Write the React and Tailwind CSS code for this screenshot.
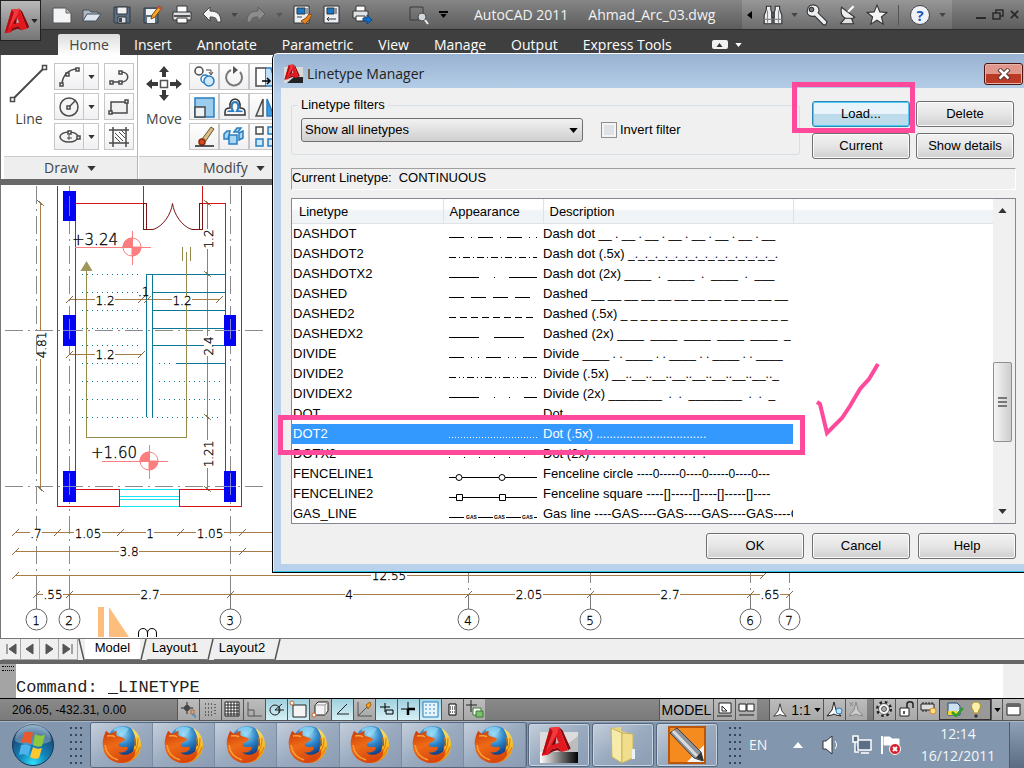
import clsx from "clsx";

const tabs = ["Insert", "Annotate", "Parametric", "View", "Manage", "Output", "Express Tools"];

const linetypes = [
  { name: "DASHDOT", dash: "15 7 1 6", desc: "Dash dot", pattern: "__ . __ . __ . __ . __ . __ . __ . __" },
  { name: "DASHDOT2", dash: "7 3 1 3", desc: "Dash dot (.5x)", pattern: "_._._._._._._._._._._._._._._." },
  { name: "DASHDOTX2", dash: "30 15 1 14", desc: "Dash dot (2x)", pattern: "____  .  ____  .  ____  .  ___" },
  { name: "DASHED", dash: "15 7", desc: "Dashed", pattern: "__ __ __ __ __ __ __ __ __ __ __ __" },
  { name: "DASHED2", dash: "7 4", desc: "Dashed (.5x)", pattern: "_ _ _ _ _ _ _ _ _ _ _ _ _ _ _ _ _" },
  { name: "DASHEDX2", dash: "30 15", desc: "Dashed (2x)", pattern: "____  ____  ____  ____  ____  _" },
  { name: "DIVIDE", dash: "15 7 1 6 1 7", desc: "Divide", pattern: "____ . . ____ . . ____ . . ____ . . ____" },
  { name: "DIVIDE2", dash: "7 3 1 3 1 3", desc: "Divide (.5x)", pattern: "__..__..__..__..__..__..__..__.._" },
  { name: "DIVIDEX2", dash: "30 15 1 14 1 14", desc: "Divide (2x)", pattern: "________  .  .  ________  .  .  _" },
  { name: "DOT", dash: "1 7", desc: "Dot", pattern: "" },
  { name: "DOT2", dash: "1 2", desc: "Dot (.5x)", pattern: ".................................", selected: true },
  { name: "DOTX2", dash: "1 14", desc: "Dot (2x)", pattern: ".  .  .  .  .  .  .  .  .  .  .  ." },
  { name: "FENCELINE1", mark: "circle", desc: "Fenceline circle", pattern: "----0-----0----0-----0----0---" },
  { name: "FENCELINE2", mark: "square", desc: "Fenceline square ----[]-----[]----[]-----[]----" },
  { name: "GAS_LINE", mark: "gas", desc: "Gas line ----GAS----GAS----GAS----GAS----G" },
];

function Caret({ className = "text-[#333]" }) {
  return (
    <svg viewBox="0 0 8 5" className={clsx("h-[4px] w-[7px] shrink-0", className)}>
      <path d="M0 0h8L4 5z" fill="currentColor" />
    </svg>
  );
}

function Icon({ size = 20, children }) {
  return (
    <svg width={size} height={size} viewBox="0 0 20 20" fill="none" stroke="#333" strokeWidth="1">
      {children}
    </svg>
  );
}

/* ---------- logos ---------- */

function AcadMark() {
  return (
    <>
      <path d="m20 1 4 4 9 20-3 2z" fill="#8c070c" />
      <path d="M10 2 20 1l10 26-7 2-4-5-8 2-3 6-7 1z" fill="#e3171d" />
      <path d="M10 2 20 1l-2 7-9 15L1 33z" fill="#f2383d" />
      <path d="m10 2 3 4L5 29l-4 4z" fill="#b50c12" />
      <path d="m12 21 5-9 3 7z" fill="#5f0407" />
      <path d="m17 12 3 7-4 1z" fill="#d9a3a4" />
      <path d="m8 32 3-6 8-2 4 5-5-2-6 2z" fill="#8c070c" />
    </>
  );
}

function Firefox() {
  return (
    <svg viewBox="0 0 40 40" className="h-[40px] w-[40px]">
      <defs>
        <radialGradient id="globe" cx="0.45" cy="0.25" r="0.75">
          <stop offset="0" stopColor="#a5e4fb" />
          <stop offset="0.45" stopColor="#2f86c9" />
          <stop offset="1" stopColor="#0a2a6b" />
        </radialGradient>
        <linearGradient id="fox" x1="0" y1="0" x2="0.4" y2="1">
          <stop offset="0" stopColor="#c8380b" />
          <stop offset="0.5" stopColor="#ee6a16" />
          <stop offset="1" stopColor="#d8480c" />
        </linearGradient>
        <linearGradient id="tail" x1="0" y1="0" x2="0" y2="1">
          <stop offset="0" stopColor="#fbe26a" />
          <stop offset="0.6" stopColor="#f6b21c" />
          <stop offset="1" stopColor="#ee8113" />
        </linearGradient>
      </defs>
      <circle cx="21" cy="17" r="16" fill="url(#globe)" />
      <path d="M12 4c5-3 11-3 15 0-3 2-1 4-5 5-4 0-6-2-10 0z" fill="#8fd6f5" opacity=".7" />
      <path d="M29 3c7 4 10 10 10 17 0 11-9 18-18 18l-2-4c8 0 13-6 13-12l2-2c0-6-1-11-5-17z" fill="url(#tail)" />
      <path d="M32 12c1 4 2 6 0 10m4-9c0 6-1 11-5 15m7-6c-2 6-5 9-9 11" fill="none" stroke="#d8760e" strokeWidth="1" />
      <path
        d="M4 6c1 0 2 2 4 3 3-1 4-3 7-3-1 2-1 3 0 5 3 1 6 1 8 3-1 3-5 3-6 5s1 3 4 3c2 0 4-1 5 1-2 5-8 5-10 4 5 5 13 3 17-3 2 8-5 14-14 14C9 38 1 30 1 21 0 15 2 11 4 6z"
        fill="url(#fox)"
      />
      <path d="M5 11c3 0 6-1 8 1M3 20c1 8 6 13 13 15" fill="none" stroke="#f9a13c" strokeWidth="1.500" />
    </svg>
  );
}

function StartOrb() {
  return (
    <svg viewBox="0 0 44 44" className="h-[44px] w-[44px]">
      <defs>
        <radialGradient id="orb" cx="0.5" cy="0.95" r="0.95">
          <stop offset="0" stopColor="#2fe0fa" />
          <stop offset="0.35" stopColor="#1287bb" />
          <stop offset="0.75" stopColor="#1b4f7e" />
          <stop offset="1" stopColor="#6f9cbb" />
        </radialGradient>
      </defs>
      <circle cx="22" cy="22" r="20.500" fill="url(#orb)" stroke="#16395a" />
      <path d="M4 18A18 18 0 0 1 40 18c-8 5-27 5-36 0z" fill="#fff" opacity=".28" />
      <path d="M13 10c3-2 6-1 9 0l-2 11c-4-2-6-2-10-1z" fill="#e8592b" />
      <path d="M24 11c3 2 6 2 10 1l-3 11c-3 1-6 1-9-1z" fill="#8dc63f" />
      <path d="M10 22c4-1 6-1 10 1l-3 10c-3-2-6-2-9-1z" fill="#4db3ea" />
      <path d="M22 24c3 2 6 2 9 1l-3 10c-3 1-6 1-9-1z" fill="#fdc82f" />
    </svg>
  );
}

/* ---------- quick access icons ---------- */

const quickIcons = {
  new: (
    <Icon>
      <path d="M1 3h13l5 5v10H1z" fill="#f2f4f6" stroke="#555" />
      <path d="M14 3v5h5z" fill="#b8bec4" stroke="#666" />
    </Icon>
  ),
  open: (
    <Icon>
      <path d="M1 16V5h6l2 2h7v3" fill="#aeb9c4" stroke="#44515d" />
      <path d="M1 16 5 9h14l-5 7z" fill="#dde6ee" stroke="#44515d" />
    </Icon>
  ),
  save: (
    <Icon>
      <path d="M2 2h16v16H3l-1-1z" fill="#5b6f83" stroke="#2f3b47" />
      <path d="M5 2h10v7H5z" fill="#eef2f5" />
      <path d="M6 12h8v6H6z" fill="#dbe1e6" />
      <path d="M7 13h3v4H7z" fill="#39475a" stroke="none" />
    </Icon>
  ),
  saveAs: (
    <Icon>
      <path d="M2 3h14v15H2z" fill="#5b6f83" stroke="#2f3b47" />
      <path d="M4 4h10v6H4zM5 12h8v6H5z" fill="#eef2f5" stroke="none" />
      <path d="m9 14 1-4 7-9 3 2-7 9z" fill="#f5a623" stroke="#7a4b05" />
      <path d="m16 2 3 2" stroke="#d4504b" strokeWidth="2" />
    </Icon>
  ),
  print: (
    <Icon>
      <path d="M5 1h10v7H5z" fill="#fff" />
      <path d="M1 7h18v8H1z" fill="#dfe3e6" />
      <path d="M2 11h16" stroke="#555" strokeWidth="2" />
      <path d="M5 13h10v5H5z" fill="#fff" />
    </Icon>
  ),
  undo: (
    <Icon>
      <path d="m1 9 7-7v4c7 0 11 3 11 11h-4c0-4-2-5-7-5v4z" fill="#f3f5f7" stroke="#444" />
    </Icon>
  ),
  redo: (
    <Icon>
      <path d="m19 9-7-7v4C5 6 1 9 1 17h4c0-4 2-5 7-5v4z" fill="#8c8c8c" stroke="#606060" />
    </Icon>
  ),
  match: (
    <Icon>
      <path d="M2 1h15v17H2z" fill="#e9eef3" />
      <path d="M5 3h8v6H5z" fill="#1b78c8" />
      <path d="M15 3v6M5 12h5" stroke="#444" />
      <path d="m9 16 5-3 3-4 3 1-3 5-4 4z" fill="#e58422" stroke="#8c4a0c" />
    </Icon>
  ),
  sheet: (
    <Icon>
      <path d="M2 1h15v17H2z" fill="#e9eef3" />
      <path d="M5 3h7v6H5z" fill="#1b78c8" />
      <path d="M14 3v6M5 14h9m-7-2-2 2 2 2" />
    </Icon>
  ),
  plot: (
    <Icon>
      <path d="M4 1h9v6H4z" fill="#fff" />
      <path d="M1 6h15v7H1z" fill="#dfe3e6" />
      <path d="M4 11h9v5H4z" fill="#fff" />
      <path d="M11 13h4v-3l5 5-5 4v-3h-4z" fill="#1270c9" stroke="#0b4687" />
    </Icon>
  ),
  preview: (
    <Icon>
      <path d="M1 2h13v13H1z" stroke="#3c3c3c" />
      <circle cx="13" cy="12" r="4" fill="#cfd6dc" stroke="#4a4a4a" />
      <path d="m16 15 3 4" stroke="#eee" strokeWidth="2" />
    </Icon>
  ),
};

function QuickButton({ name, label }) {
  return (
    <button aria-label={label} className="flex h-full w-[30px] items-center justify-center">
      {quickIcons[name]}
    </button>
  );
}

function TitleBar() {
  return (
    <header className="flex h-[30px] items-center border-b border-[#2c2c2c] bg-linear-to-b from-[#868686] to-[#5c5c5c] pl-[47px]">
      <QuickButton name="new" label="New" />
      <QuickButton name="open" label="Open" />
      <QuickButton name="save" label="Save" />
      <QuickButton name="saveAs" label="Save As" />
      <QuickButton name="print" label="Print" />
      <QuickButton name="undo" label="Undo" />
      <span className="flex w-[14px] justify-center"><Caret className="text-[#444]" /></span>
      <QuickButton name="redo" label="Redo" />
      <span className="flex w-[16px] justify-center"><Caret className="text-[#555]" /></span>
      <QuickButton name="match" label="Match Properties" />
      <QuickButton name="sheet" label="Sheet Set Manager" />
      <QuickButton name="plot" label="Plot" />
      <span className="w-[27px]" />
      <QuickButton name="preview" label="Plot Preview" />
      <span className="flex w-[18px] flex-col items-center gap-px">
        <span className="h-[2px] w-[9px] bg-black" />
        <Caret className="text-black" />
      </span>
      <h1 className="flex flex-1 gap-5 pl-[22px] text-[14px] whitespace-nowrap text-[#f2f2f2]">
        <span>AutoCAD 2011</span>
        <span>Ahmad_Arc_03.dwg</span>
      </h1>
      <div className="flex h-full w-[210px] items-center bg-linear-to-b from-[#979797] to-[#6c6c6c] pl-[5px]">
        <svg viewBox="0 0 5 8" className="h-[8px] w-[5px]"><path d="M5 0v8L0 4z" fill="#000" /></svg>
        <button aria-label="Search" className="ml-[10px]">
          <Icon size={22}>
            <path d="M4 2h4v3l1 3v10H2v-8l2-5zM12 2h4v3l2 5v8h-7V8l1-3z" fill="#eceff1" />
            <path d="M9 8h2v4H9z" fill="#777" />
            <path d="M2 14h7m2 0h7M5 6v11M15 6v11" stroke="#888" />
          </Icon>
        </button>
        <span className="ml-[7px]"><Caret className="text-[#444]" /></span>
        <button aria-label="Subscription Center" className="ml-[8px]">
          <Icon size={22}>
            <path d="M2 3c2-3 7-3 9 0 1 2 1 4 0 5l8 8-1 3h-2l-8-8C4 12 1 10 1 7z" fill="#eceff1" />
            <circle cx="5" cy="5" r="2" fill="#777" />
          </Icon>
        </button>
        <button aria-label="Communication Center" className="ml-[8px]">
          <Icon size={22}>
            <path d="m5 3 12 9c-4 3-8 2-10 0S4 7 5 3z" fill="#eceff1" />
            <path d="m11 7 5-5" stroke="#fff" strokeWidth="2" />
            <path d="m8 13-4 5h12l-2-5z" fill="#dfe3e6" />
          </Icon>
        </button>
        <button aria-label="Favorites" className="ml-[8px]">
          <Icon size={22}>
            <path d="m10 1 2.600 6.200 6.400.4-5 4.200 1.700 6.500-5.700-3.600-5.700 3.600L6 11.800 1 7.600l6.400-.4z" fill="#f2f4f6" />
          </Icon>
        </button>
        <span className="ml-[10px] h-[20px] w-px bg-[#555]" />
        <button aria-label="Help" className="ml-[11px] flex h-[20px] w-[20px] items-center justify-center rounded-full border border-[#444] bg-[#eef3fa] text-[15px] font-bold text-[#1f57b5]">
          ?
        </button>
        <span className="ml-[9px]"><Caret className="text-[#444]" /></span>
      </div>
      <div className="flex w-[72px] items-center justify-end gap-[6px] pr-[5px]">
        <button aria-label="Minimize" className="mt-[7px] h-[2px] w-[10px] bg-[#2a2a2a]" />
        <button aria-label="Restore">
          <svg viewBox="0 0 12 11" className="h-[11px] w-[12px]" fill="none" stroke="#2a2a2a" strokeWidth="1.500">
            <path d="M4 4V1h7v6H8M1 4h7v6H1z" />
          </svg>
        </button>
        <button aria-label="Close">
          <svg viewBox="0 0 10 10" className="h-[9px] w-[9px]" stroke="#2a2a2a" strokeWidth="2"><path d="m1 1 8 8m0-8L1 9" /></svg>
        </button>
      </div>
    </header>
  );
}

function TabBar() {
  return (
    <nav className="flex h-[25px] items-end bg-[#3f3f3f] pl-[58px] text-[14px] text-white">
      <a href="#home" className="flex h-[21px] w-[62px] items-center justify-center rounded-t-[2px] bg-linear-to-b from-[#dcdcdc] to-white text-[#444]">
        Home
      </a>
      <div className="flex h-[21px] items-center gap-[25px] pl-[14px] whitespace-nowrap">
        {tabs.map((tab) => (
          <a key={tab} href={`#${tab}`}>{tab}</a>
        ))}
      </div>
      <div className="flex h-[21px] items-center gap-[7px] pl-10">
        <button aria-label="Minimize ribbon" className="flex h-[9px] w-[16px] items-center justify-center rounded-[2px] bg-[#f0f0f0]">
          <svg viewBox="0 0 6 4" className="h-[4px] w-[7px]"><path d="M0 4h6L3 0z" fill="#333" /></svg>
        </button>
        <Caret className="text-white" />
      </div>
    </nav>
  );
}

/* ---------- ribbon ---------- */

function Tool({ children, caret, label }) {
  return (
    <button aria-label={label} className="flex h-[27px] items-center border border-[#c6c6c6] bg-linear-to-b from-white to-[#f0f0f2]">
      <svg viewBox="0 0 28 24" className="h-[24px] w-[28px]" fill="none" stroke="#4a4a4a" strokeWidth="1.500">
        {children}
      </svg>
      {caret && (
        <span className="flex h-full w-[15px] items-center justify-center border-l border-[#c6c6c6]">
          <Caret className="text-[#333]" />
        </span>
      )}
    </button>
  );
}

function PanelLabel({ children }) {
  return (
    <div className="flex h-[23px] items-center gap-2 border-t border-[#ccc] bg-[#eee] text-[14px] text-[#444]">
      {children}
      <svg viewBox="0 0 10 6" className="h-[5px] w-[9px]"><path d="M0 0h10L5 6z" fill="#333" /></svg>
    </div>
  );
}

function Ribbon() {
  return (
    <section className="flex h-[130px] overflow-hidden border-b-[6px] border-l border-[#696969] bg-white pl-[3px] text-[#444]">
      <div className="flex w-[134px] shrink-0 flex-col border-r border-[#b5b5b5]">
        <div className="flex flex-1 items-start pt-[8px]">
          <button className="flex w-[50px] flex-col items-center gap-[6px] text-[14px]">
            <svg viewBox="0 0 40 40" className="h-[40px] w-[40px]" fill="#fff" stroke="#4a4a4a">
              <path d="M3 37 36 4" strokeWidth="2" />
              <path d="M1.500 34.500h4v4h-4zM33.500 2.500h4v4h-4z" strokeWidth="1.500" />
            </svg>
            Line
          </button>
          <div className="flex flex-col gap-[3px]">
            <Tool caret label="Arc">
              <path d="M7 20c0-9 6-16 16-16" />
              <path d="M5 18h3v3H5zM11 8h3v3h-3zM21 3h3v3h-3z" fill="#fff" />
            </Tool>
            <Tool caret label="Circle">
              <circle cx="14" cy="12" r="9" fill="#f4f4f4" />
              <path d="m14 12 6-6" />
              <path d="M12 11h3v3h-3z" fill="#fff" />
            </Tool>
            <Tool caret label="Ellipse">
              <ellipse cx="14" cy="12" rx="9" ry="5" fill="#f4f4f4" />
              <path d="M14 10v5m-2-2h5" strokeWidth="1" />
              <path d="M13 6h3v3h-3zM22 11h3v3h-3z" fill="#fff" />
            </Tool>
          </div>
          <div className="ml-[5px] flex flex-col gap-[3px]">
            <Tool label="Polyline">
              <path d="M6 17h10c9 0 9-10 0-10" />
              <path d="M5 16h3v3H5zM14 16h3v3h-3zM14 6h3v3h-3z" fill="#fff" />
            </Tool>
            <Tool label="Rectangle">
              <path d="M6 7h16v11H6z" fill="#f0f0f0" />
              <path d="M4 16h3v3H4zM20 5h3v3h-3z" fill="#fff" />
            </Tool>
            <Tool label="Hatch">
              <path d="M8 2v20M21 2v20M4 5h20M4 18h20" />
              <path d="m10 8 8 8m-8-4 5 5m-1-10 6 6m-10-8m6 0 4 4" strokeWidth="1" />
            </Tool>
          </div>
        </div>
        <PanelLabel><span className="pl-[40px]">Draw</span></PanelLabel>
      </div>
      <div className="ml-px flex w-[200px] shrink-0 flex-col">
        <div className="flex flex-1 items-start pt-[8px]">
          <button className="flex w-[50px] flex-col items-center gap-[6px] text-[14px]">
            <svg viewBox="0 0 40 40" className="h-[40px] w-[40px]" fill="#3a3a3a">
              <path d="m20 3 5 6h-3v5h-4V9h-3zM20 38l5-6h-3v-5h-4v5h-3zM2 21l6-5v3h6v4H8v3zM38 21l-6-5v3h-6v4h6v3z" />
              <path d="M16.500 17.500h7v7h-7z" fill="#fff" stroke="#555" strokeWidth="1.500" />
            </svg>
            Move
          </button>
          <div className="flex flex-col gap-[3px]">
            <div className="flex">
              <Tool label="Copy">
                <circle cx="9" cy="6" r="4" />
                <circle cx="15" cy="14" r="4" fill="#fff" stroke="#2a7dc0" />
                <circle cx="19" cy="16" r="5" fill="#cfe8f8" stroke="#2a7dc0" />
                <path d="M16 5h5v4m-2-2 2 3 2-3" strokeWidth="1" />
              </Tool>
              <Tool label="Rotate">
                <path d="M11 5a8 8 0 1 0 9 2" strokeWidth="2" stroke="#777" />
                <path d="m13 1 5 4-5 4z" fill="#555" stroke="none" />
              </Tool>
              <Tool label="Stretch">
                <path d="M6 3h10v18H6z" fill="#fff" />
                <path d="M16 3h5l5 18H16" fill="#bfe0f6" stroke="#2a7dc0" />
                <path d="M12 16h8m-3-3 3 3-3 3" stroke="#000" />
              </Tool>
            </div>
            <div className="flex">
              <Tool label="Scale">
                <path d="M5 3h19v19H5z" fill="#9ccdef" stroke="#2a7dc0" />
                <path d="M5 12h10v10H5z" fill="#eef1f4" />
              </Tool>
              <Tool label="Offset">
                <path d="M5 20v-3c0-3 2-4 5-4-2-12 12-12 10 0 3 0 5 1 5 4v3z" stroke="#333" />
                <path d="M8 17c0-1 2-1 5-1-2-3-2-9 2-9s4 6 2 9c3 0 5 0 5 1" stroke="#2a7dc0" strokeWidth="2" />
              </Tool>
              <Tool label="Mirror">
                <path d="M13 4v17H6z" fill="#eee" />
                <path d="M17 4v17h7z" fill="#3f9ae0" stroke="#2a7dc0" />
              </Tool>
            </div>
            <div className="flex">
              <Tool label="Erase">
                <path d="m12 14 9-12 3 2-9 13z" fill="#d9bd86" stroke="#6b5430" strokeWidth="1" />
                <circle cx="12" cy="17" r="3" fill="#d9481c" stroke="#8c2a0c" />
                <path d="M5 21h19" stroke="#222" />
              </Tool>
              <Tool label="Explode">
                <path d="M9 10h8v9H9zM4 9l3-3h3l-2 8H4zM14 7l3-4h4l-3 4zM19 8l4-2v7l-4 2z" fill="#a8d6f3" stroke="#2a7dc0" />
              </Tool>
              <Tool label="Array">
                <path d="M6 2h7v7H6z" />
                <path d="M18 2h7v7h-7zM6 14h7v7H6zM18 14h7v7h-7z" fill="#cfe8f8" stroke="#2a7dc0" />
              </Tool>
            </div>
          </div>
        </div>
        <PanelLabel><span className="pl-[64px]">Modify</span></PanelLabel>
      </div>
    </section>
  );
}

/* ---------- model space ---------- */

const axes = [
  { x: 36, n: 1 },
  { x: 69, n: 2 },
  { x: 230, n: 3 },
  { x: 468, n: 4 },
  { x: 590, n: 5 },
  { x: 750, n: 6 },
  { x: 789, n: 7 },
];

const dims = [
  { x: 105, y: 115, t: "1.2" },
  { x: 182, y: 115, t: "1.2" },
  { x: 105, y: 169, t: "1.2" },
  { x: 36, y: 348, t: ".7" },
  { x: 88, y: 348, t: "1.05" },
  { x: 150, y: 348, t: "1" },
  { x: 210, y: 348, t: "1.05" },
  { x: 129, y: 366, t: "3.8" },
  { x: 389, y: 390, t: "12.55" },
  { x: 53, y: 409, t: ".55" },
  { x: 150, y: 409, t: "2.7" },
  { x: 349, y: 409, t: "4" },
  { x: 529, y: 409, t: "2.05" },
  { x: 670, y: 409, t: "2.7" },
  { x: 770, y: 409, t: ".65" },
  { x: 41, y: 160, t: "4.81", vertical: true },
  { x: 208, y: 54, t: "1.2", vertical: true },
  { x: 208, y: 161, t: "2.4", vertical: true },
  { x: 208, y: 269, t: "1.21", vertical: true },
];

const ticks = [
  [15, 347], [57, 347], [120, 347], [180, 347], [242, 347],
  [15, 366], [242, 366], [15, 390], [763, 390],
  [69, 114], [141, 114], [147, 114], [219, 114], [69, 169], [141, 169],
  ...axes.map((a) => [a.x, 409]),
];

function Dim({ x, y, t, vertical }) {
  // blank out the dimension line behind the value
  const w = t.length * 8 - (t.includes(".") ? 4 : 0);
  return (
    <g transform={`translate(${x} ${y})${vertical ? " rotate(-90)" : ""}`}>
      <rect x={-w / 2} y="-4" width={w} height="8" fill="#fff" stroke="none" />
      <text y="5" textAnchor="middle">{t}</text>
    </g>
  );
}

function LevelMark({ x, y, from, to }) {
  return (
    <g stroke="#fb7f7f" fill="none">
      <path d={`M${from} ${y + 0.5}H${to}M${x + 0.5} ${y - 16}V${y + 18}`} />
      <circle cx={x} cy={y} r="9" />
      <path d={`M${x} ${y}h-9a9 9 0 0 1 9-9zM${x} ${y}h9a9 9 0 0 1-9 9z`} fill="#fb7f7f" />
    </g>
  );
}

function Drawing() {
  return (
    <main className="flex-1 overflow-hidden border-l border-[#777] bg-white">
      <svg viewBox="1 0 1023 452" preserveAspectRatio="xMinYMin meet" className="block h-[452px] w-full">
        <g fill="none" shapeRendering="crispEdges">
          <g stroke="#8a8a8a" strokeDasharray="18 5 2 5">
            <path d="M36.500 1V424M69.500 1V424M230.500 1V424M468.500 380V424M590.500 380V424M750.500 380V424M789.500 380V424" />
            <path d="M5 145.500H268M5 301.500H268" />
          </g>
          <g stroke="#a87c48">
            <path d="M40.500 18V304M207.500 18V304" />
            <path d="M69 114.500H219M69 169.500H142M15 347.500H272M15 366.500H272M15 390.500H763M36 409.500H789" />
            <path d="M37 15l7 6M37 301l7 6M204 15l7 6M204 86l7 6M204 229l7 6M204 301l7 6" stroke="#8a7a55" />
          </g>
          <g stroke="#d4151c">
            <path d="M57.500 1V321.500H241.500V1M75.500 18V304M75 18.500H147M143.500 1V18M202.500 1V18M199 18.500H225V304" />
            <path d="M75 304.500H119.500V321M225 304.500H179.500V321" />
          </g>
          <path d="M120 304.500h59M120 311.500h59M120 314.500h59M120 321.500h59" stroke="#14e8f2" />
          <g stroke="#0a7896">
            <path d="M146.500 89V232M152.500 89V232M146 89.500H225M152 107.500H225M152 125.500H225M152 143.500H225M152 160.500H225M176 178.500H225" />
            <path d="M82 89.500H142M82 107.500H142M82 125.500H142M82 143.500H142M82 160.500H142M82 178.500H142M82 196.500H142M82 214.500H142M82 232.500H220M159 178.500H172M159 196.500H220M159 214.500H220" strokeDasharray="1 4" />
          </g>
          <path d="M86.500 86V252.500H186.500V67M182.500 62V76M190.500 62V76" stroke="#948a4c" />
          <path d="M146.500 18v26h-3V18zM202.500 18v26h-3V18z" stroke="#7c1414" />
        </g>
        <path d="M146 44.500h7c10-3 18-15 19.500-26 1.500 11 9.500 23 19.500 26h8" fill="none" stroke="#7c1414" />
        <path d="m86.500 76 6 10h-12z" fill="#a0955a" />
        <path d="M63 6h13v30H63zM63 130h13v31H63zM224 130h12v31h-12zM63 286h13v31H63zM224 286h12v31h-12z" fill="#0404f4" />
        <path d="M69.500 11v20M69.500 134v20M230.500 134v20M69.500 288v22M230.500 288v22M63 145.500h13M224 145.500h12M63 301.500h13M224 301.500h12" stroke="#8080d0" />
        <LevelMark x={132} y={62} from={75} to={151} />
        <LevelMark x={149} y={276} from={102} to={168} />
        {ticks.map(([x, y]) => (
          <path key={`${x}-${y}`} d={`M${x - 3} ${y + 4}l7-7`} stroke="#8a6a45" />
        ))}
        {axes.map((axis) => (
          <g key={axis.n} fill="none">
            <path d={`M${axis.x + 0.5} 410v14`} stroke="#777" />
            <circle cx={axis.x + 0.5} cy="434.500" r="10.500" stroke="#666" />
          </g>
        ))}
        <g fill="#000" stroke="#000" strokeWidth=".3" className="font-['DejaVu_Sans'] text-[12px] font-extralight">
          {dims.map((d) => (
            <Dim key={`${d.x}-${d.y}`} {...d} />
          ))}
          {axes.map((axis) => (
            <text key={axis.n} x={axis.x} y="440" textAnchor="middle">{axis.n}</text>
          ))}
          <text x="138" y="111">.1</text>
          <text x="72" y="60" className="text-[15px]">+3.24</text>
          <text x="91" y="273" className="text-[15px]">+1.60</text>
        </g>
        <path d="M98 422h6v30h-6zM109 422v30h20z" fill="#fdbd7c" />
        <path d="M138.500 452v-4c0-6 9-6 9 0v4m0-4c0-6 9-6 9 0v4" fill="none" stroke="#000" />
      </svg>
    </main>
  );
}

function Slash({ back }) {
  return (
    <svg viewBox="0 0 7 21" className="h-[21px] w-[7px] shrink-0" stroke="#555" strokeWidth="1.500">
      <path d={back ? "M1 0l5 21" : "M6 0L1 21"} />
    </svg>
  );
}

function LayoutTabs() {
  return (
    <div className="flex h-[22px] border-t border-[#777] bg-[#efefef] pl-[2px] font-['Liberation_Sans'] text-[13px] text-black">
      {["M3 2v10M12 2v10L5 7z", "M10 2v10L3 7z", "M4 2v10l7-5z", "M2 2v10l7-5zM11 2v10"].map((d) => (
        <button key={d} aria-label="Scroll layouts" className="flex w-[19px] items-center justify-center border-r border-b border-[#aaa]">
          <svg viewBox="0 0 14 14" className="h-[14px] w-[14px]" fill="#555" stroke="#555"><path d={d} /></svg>
        </button>
      ))}
      <Slash back />
      <a href="#model" className="flex w-[55px] items-center justify-center border-b border-[#777] bg-white pb-[3px]">Model</a>
      <Slash />
      <a href="#layout1" className="flex w-[60px] items-center justify-center border-b border-[#777] pr-1 pb-[3px]">Layout1</a>
      <Slash />
      <a href="#layout2" className="flex w-[60px] items-center justify-center border-b border-[#777] pr-1 pb-[3px]">Layout2</a>
      <Slash />
    </div>
  );
}

function CommandLine() {
  return (
    <div className="flex h-[39px] border-t-4 border-b border-t-[#666] border-b-black bg-white">
      <div className="flex w-[16px] shrink-0 justify-center bg-[#a4a4a4] pt-[2px]">
        <span className="h-[5px] w-[12px] border-y border-dotted border-black" />
      </div>
      <label className="flex flex-1 items-end pb-px font-['Liberation_Mono'] text-[17px] leading-[18px] whitespace-pre text-[#222]">
        <span>Command: </span>
        <input type="text" defaultValue="_LINETYPE" className="min-w-0 flex-1 outline-none" />
      </label>
      <div className="w-[21px] bg-[#efefef]" />
    </div>
  );
}

/* ---------- status bar ---------- */

const toggles = [
  { label: "Infer Constraints", icon: <><path d="M8 2v12M2 8h12" /><path d="M6 6h4v4H6z" /><path d="M12 10h3v4h-3z" stroke="#d2601a" /><path d="M13 15h3v3" stroke="#2a7dc0" /></> },
  { label: "Snap Mode", icon: <path d="M4 4h9M4 8h9M4 12h9M4 15h9M14 4v12" strokeDasharray="1 2" stroke="#111" /> },
  { label: "Grid Display", icon: <><path d="M2 2h14v14H2z" fill="#fff" /><path d="M5 2v14M8 2v14M11 2v14M14 2v14M2 5h14M2 8h14M2 11h14M2 14h14" /></> },
  { label: "Ortho Mode", icon: <path d="M3 2v14h14M3 10h6v6" stroke="#555" /> },
  { label: "Polar Tracking", on: true, icon: <><circle cx="8" cy="10" r="5" /><path d="M8 10 15 4M8 10h9M12 6v7" /></> },
  { label: "Object Snap", on: true, icon: <><path d="M4 5h13v12H4z" fill="#f4f4f4" /><circle cx="3" cy="3" r="2" fill="#fff" stroke="#d2601a" /></> },
  { label: "3D Object Snap", icon: <><path d="M4 5l3-3h10v9l-3 4H4z" fill="#f4f4f4" /><path d="M4 5h10v10M14 5l3-3" stroke="#999" /><circle cx="3" cy="15" r="2" fill="#fff" stroke="#d2601a" /></> },
  { label: "Object Snap Tracking", on: true, icon: <path d="M14 4 4 14h12" /> },
  { label: "Dynamic UCS", icon: <><path d="M3 2v14h14M3 16l9-9" stroke="#555" /><path d="m11 5 4-3 1 3-3 4z" fill="#f5a623" stroke="#a35f05" /></> },
  { label: "Dynamic Input", on: true, icon: <path d="M8 3v9M3 7h10M9 10h7v4H9z" stroke="#000" /> },
  { label: "Lineweight", on: true, icon: <><path d="M9 2v8M2 9h7" stroke="#000" /><path d="M9 9h7M9 9v6" stroke="#000" strokeWidth="2.500" /></> },
  { label: "Transparency", on: true, icon: <><path d="M2 2h15v15H2z" fill="#e6f4fc" stroke="#2a7dc0" /><path d="M4 5h12M4 9h12M4 13h12" stroke="#8cbfe2" strokeWidth="2" strokeDasharray="2 2" /></> },
  { label: "Quick Properties", icon: <><path d="M6 4h7v11H6z" fill="#fff" stroke="#000" /><path d="M7 7h5M7 9h5M7 12h5" stroke="#000" strokeDasharray="1 1" /></> },
  { label: "Selection Cycling", icon: <><path d="M6 0v12M1 5h11" /><path d="M8 8h8v7H8z" fill="#fff" stroke="#3a7a32" /><path d="M11 11h7v6h-7z" fill="#7cbf6c" stroke="#3a7a32" /></> },
];

function StatusButton({ label, on, children, className = "w-[22px]" }) {
  return (
    <button
      aria-label={label}
      className={clsx(
        "flex h-full shrink-0 items-center justify-center gap-[3px] border-l border-[#555] text-black",
        on ? "bg-linear-to-b from-[#9fd0de] to-[#d6f0f6]" : "bg-linear-to-b from-[#bcbcbc] to-[#a8a8a8]",
        className
      )}>
      {children}
    </button>
  );
}

function StatusIcon({ children }) {
  return (
    <svg viewBox="0 0 19 19" className="h-[19px] w-[19px] shrink-0" fill="none" stroke="#222" strokeWidth="1">
      {children}
    </svg>
  );
}

const annoMark = "M9 2l2 8 5 6-5-1-2-1-2 1-5 1 5-6z";

function StatusBar() {
  return (
    <footer className="flex h-[22px] items-center border-b border-[#555] bg-linear-to-b from-[#8a8a8a] to-[#7a7a7a] font-['Liberation_Sans']">
      <div className="w-[177px] shrink-0 pl-3 text-[12px] text-black">206.05, -432.31, 0.00</div>
      {toggles.map((t) => (
        <StatusButton key={t.label} label={t.label} on={t.on}>
          <StatusIcon>{t.icon}</StatusIcon>
        </StatusButton>
      ))}
      <div className="flex-1" />
      <StatusButton className="w-[54px] text-[14px]">MODEL</StatusButton>
      <StatusButton label="Quick View Layouts">
        <StatusIcon><path d="M4 3h12v10H4zM2 16h15" fill="#fff" /><path d="M7 6v5h5z" /></StatusIcon>
      </StatusButton>
      <StatusButton label="Quick View Drawings">
        <StatusIcon><path d="M2 4h7v7H2zM10 4h7v7h-7zM2 15h15" fill="#fff" /></StatusIcon>
      </StatusButton>
      <span className="w-[12px]" />
      <StatusButton className="w-[54px] text-[14px]">
        <svg viewBox="0 0 18 18" className="h-[16px] w-[16px]"><path d={annoMark} fill="#fff" stroke="#333" /></svg>
        1:1
        <Caret className="text-black" />
      </StatusButton>
      <StatusButton label="Annotation Visibility">
        <StatusIcon><path d={annoMark} fill="#fff" /><circle cx="14" cy="11" r="3" fill="#bfe3f6" stroke="#2a7dc0" /></StatusIcon>
      </StatusButton>
      <StatusButton label="Add Scales">
        <StatusIcon><path d={annoMark} fill="#ccc" stroke="#888" /><path d="m2 2 4 4M6 2 3 6" stroke="#888" /></StatusIcon>
      </StatusButton>
      <span className="w-[6px]" />
      <StatusButton label="Workspace Switching">
        <StatusIcon>
          <circle cx="9" cy="9" r="6.500" fill="#fff" strokeWidth="3" strokeDasharray="2.500 2.600" />
          <circle cx="9" cy="9" r="5.500" fill="#f4f4f4" stroke="#555" />
          <circle cx="9" cy="9" r="2.500" fill="#aaa" stroke="#555" />
        </StatusIcon>
      </StatusButton>
      <StatusButton label="Lock UI">
        <StatusIcon><path d="M3 8h9v8H3z" fill="#fff" /><path d="M10 8V4c0-3 6-3 6 0v4M7 11v3" strokeWidth="1.500" /></StatusIcon>
      </StatusButton>
      <StatusButton label="Hardware Acceleration">
        <StatusIcon><path d="M2 4h13v6H2z" fill="#ddd" /><path d="M4 2v2m3-2v2m3-2v2m3-2v2M4 10v2m3-2v2" /><circle cx="14" cy="11" r="3" fill="#ffe08a" stroke="#e08a1a" /></StatusIcon>
      </StatusButton>
      <div className="flex h-full w-[52px] items-center justify-center gap-[3px] border border-[#333] bg-[#999]">
        <StatusIcon>
          <path d="M3 3h9l3 3v9H3z" fill="#cfe0f0" stroke="#234a77" />
          <path d="M3 11h9v4H3z" fill="#f7d92e" stroke="none" />
          <path d="m7 12 4 4 7-8" stroke="#2aa02a" strokeWidth="2.500" />
        </StatusIcon>
        <StatusIcon><path d="M9 2c4 0 6 4 3 8l-1 3H7l-1-3C3 6 5 2 9 2z" fill="#fdf0a8" stroke="#b09428" /><path d="M8 15h2v2H8z" fill="#888" /></StatusIcon>
      </div>
      <StatusButton label="Status bar menu" className="w-[11px]"><Caret className="text-black" /></StatusButton>
      <StatusButton label="Clean Screen">
        <StatusIcon><path d="M3 4h13v11H3z" fill="#fff" /><path d="M3 5.500h13" strokeWidth="3" stroke="#666" /></StatusIcon>
      </StatusButton>
    </footer>
  );
}

/* ---------- taskbar ---------- */

function Grip() {
  return (
    <div className="grid shrink-0 grid-cols-3 gap-x-[3px] gap-y-[5px]">
      {Array.from({ length: 18 }, (_, i) => (
        <span key={i} className="h-[2px] w-[2px] bg-[#39465a]" />
      ))}
    </div>
  );
}

function TaskButton({ label, children, grouped }) {
  return (
    <button
      aria-label={label}
      className={clsx(
        "flex h-[44px] items-center justify-center bg-linear-to-br from-[#c5cfdc] via-[#9aabc0] to-[#8b9cb3]",
        grouped ? "flex-1 border-r border-[#7b8ba1]" : "w-[62px] shrink-0 rounded-[3px] border border-[#56667c] ring-1 ring-[#c9d4e1] ring-inset"
      )}>
      {children}
    </button>
  );
}

function Taskbar() {
  return (
    <div className="flex h-[47px] items-center overflow-hidden border-t border-[#a8b5c6] bg-[#8296ad] text-[14px] text-[#f4f6f8]">
      <button aria-label="Start" className="ml-[11px] shrink-0"><StartOrb /></button>
      <div className="ml-[15px]"><Grip /></div>
      <div className="ml-[8px] flex w-[437px] shrink-0 overflow-hidden rounded-[3px] border border-[#56667c]">
        {Array.from({ length: 7 }, (_, i) => (
          <TaskButton key={i} label="Firefox" grouped><Firefox /></TaskButton>
        ))}
      </div>
      <div className="ml-px flex gap-[2px]">
        <TaskButton label="AutoCAD">
          <svg viewBox="0 0 40 40" className="h-[40px] w-[40px]">
            <defs>
              <linearGradient id="acadfade" x1="0" y1="0" x2="1" y2="0">
                <stop offset="0" stopColor="#fff" />
                <stop offset="1" stopColor="#000" />
              </linearGradient>
            </defs>
            <path d="M1 7h38v20H1z" fill="#dcdcdc" />
            <path d="m18 27 21-16v16z" fill="#bdbdbd" />
            <path d="M1 27h38v11H1z" fill="url(#acadfade)" />
            <g transform="translate(2 1) scale(.9)"><AcadMark /></g>
          </svg>
        </TaskButton>
        <TaskButton label="Explorer">
          <svg viewBox="0 0 30 40" className="h-[40px] w-[30px]">
            <path d="M3 3l10-1v4l11 3v25l-11 3z" fill="#e9d580" />
            <path d="M3 3l11 5v30L4 32z" fill="#f7eba9" stroke="#c9b35a" />
            <path d="M14 8l11 1v24l-11 5z" fill="#f0de8d" stroke="#c9b35a" />
            <path d="M24 24h3v10h-3z" fill="#e8f2f8" />
          </svg>
        </TaskButton>
        <TaskButton label="Paint tool">
          <svg viewBox="0 0 40 40" className="h-[40px] w-[40px]">
            <path d="M2 2h36v36H2z" fill="#f58a1f" stroke="#b9560c" strokeWidth="2" />
            <path d="m20 37 17-17v17z" fill="#f4f4f4" />
            <path d="m3 8 7-5 24 24 2 9-9-3z" fill="#8d9196" stroke="#3f4347" />
            <path d="m6 6 24 25" stroke="#d9dcdf" strokeWidth="3" />
            <path d="m29 33 5-6 3 9z" fill="#333" />
          </svg>
        </TaskButton>
      </div>
      <div className="ml-[11px]"><Grip /></div>
      <span className="ml-[8px] w-[20px]">EN</span>
      <div className="ml-auto flex items-center">
        <svg viewBox="0 0 10 6" className="h-[6px] w-[10px]"><path d="M0 6h10L5 0z" fill="#fff" /></svg>
        <svg viewBox="0 0 20 20" className="ml-[19px] h-[20px] w-[20px]" fill="#fff" stroke="#333">
          <path d="M1 6h3l6-5v18l-6-5H1z" />
          <path d="M13 6c2 3 2 5 0 8" fill="none" stroke="#fff" />
        </svg>
        <svg viewBox="0 0 20 20" className="ml-[10px] h-[20px] w-[20px]" fill="#5c6f86" stroke="#fff" strokeWidth="1.500">
          <path d="M6 5h13v10H6zM9 18h8M1 1h5v6H1zM3 7v10h4" />
        </svg>
        <svg viewBox="0 0 20 20" className="ml-[9px] h-[20px] w-[20px]" stroke="#fff">
          <path d="M1 1v18" strokeWidth="2" />
          <path d="M3 2h6l2 2h7v8h-7L9 10H3z" fill="#fff" />
          <circle cx="14" cy="14" r="5.500" fill="#d3202a" />
          <path d="m12 12 4 4m0-4-4 4" strokeWidth="2" />
        </svg>
        <div className="ml-[18px] w-[78px] text-center leading-[22px] whitespace-nowrap">
          <div>12:14</div>
          <div>16/12/2011</div>
        </div>
        <button aria-label="Show desktop" className="ml-[12px] h-[47px] w-[15px] border-l border-[#4c5b6f] bg-linear-to-b from-[#8ea0b6] to-[#5a6b82]" />
      </div>
    </div>
  );
}

/* ---------- linetype manager ---------- */

function DialogButton({ children, primary }) {
  return (
    <button
      className={clsx(
        "h-[26px] w-[98px] shrink-0 rounded-[3px] border text-[13px] ring-1 ring-inset",
        primary
          ? "border-[#2c86b4] bg-linear-to-b from-[#e8f4fa] from-50% to-[#bcdcec] to-50% ring-[#4fcdf5]"
          : "border-[#707070] bg-linear-to-b from-[#f2f2f2] via-[#e6e6e6] to-[#cfcfcf] ring-[#fafafa]"
      )}>
      {children}
    </button>
  );
}

function Sample({ type }) {
  return (
    <svg viewBox="0 0 88 20" className="block h-[20px] w-[88px]" fill="none" stroke="currentColor" shapeRendering={type.mark ? "auto" : "crispEdges"}>
      {type.dash && <path d="M0 13.500H88" strokeDasharray={type.dash} />}
      {type.mark === "circle" && <path d="M0 13.500h7m6 0h37m6 0h32M13 13.500a3 3 0 1 1-6 0 3 3 0 0 1 6 0zM56 13.500a3 3 0 1 1-6 0 3 3 0 0 1 6 0z" />}
      {type.mark === "square" && <path d="M0 13.500h7m7 0h36m7 0h31M7.500 10.500h6v6h-6zM50.500 10.500h6v6h-6z" />}
      {type.mark === "gas" && (
        <>
          <path d="M0 13.500h15M29 13.500h15M57 13.500h15M85 13.500h3" />
          <g fill="currentColor" stroke="none" className="text-[5px] font-bold">
            <text x="17" y="15">GAS</text>
            <text x="45" y="15">GAS</text>
            <text x="73" y="15">GAS</text>
          </g>
        </>
      )}
    </svg>
  );
}

function LinetypeTable() {
  return (
    <div className="flex h-[326px] overflow-hidden border border-[#828790] bg-white">
      <div className="min-w-0 flex-1 overflow-hidden">
        <table className="w-full table-fixed border-collapse text-left text-[13px] leading-[20px]">
          <colgroup>
            <col className="w-[151px]" />
            <col className="w-[100px]" />
            <col className="w-[250px]" />
            <col />
          </colgroup>
          <thead>
            <tr className="h-[24px] bg-linear-to-b from-white from-40% to-[#f1f4f6] to-50%">
              <th className="border-r border-b border-[#dfe3e6] pt-[3px] pb-0 pl-[7px] font-normal">Linetype</th>
              <th className="border-r border-b border-[#dfe3e6] pt-[3px] pb-0 pl-[6px] font-normal">Appearance</th>
              <th className="border-r border-b border-[#dfe3e6] pt-[3px] pb-0 pl-[6px] font-normal">Description</th>
              <th className="border-b border-[#dfe3e6]" />
            </tr>
          </thead>
          <tbody>
            {linetypes.map((type) => (
              <tr key={type.name} className="h-[20px]">
                <td className={clsx("p-0 pl-px", type.selected && "bg-[#3399ff] text-white")}>{type.name}</td>
                <td className={clsx("p-0 pl-[6px]", type.selected && "bg-[#3399ff] text-white")}><Sample type={type} /></td>
                <td className={clsx("overflow-hidden p-0 whitespace-pre", type.selected && "bg-[#3399ff] text-white")}>
                  {type.desc}
                  {type.pattern && <span className="text-[12px]"> {type.pattern}</span>}
                </td>
                <td className="p-0" />
              </tr>
            ))}
          </tbody>
        </table>
      </div>
      <div className="flex w-[22px] flex-col items-center bg-[#f0f0f0] pr-[3px]">
        <svg viewBox="0 0 10 6" className="mt-[9px] h-[5px] w-[9px]"><path d="M0 6h10L5 0z" fill="#333" /></svg>
        <div className="h-[149px]" />
        <div className="flex h-[80px] w-[19px] flex-col items-center justify-center gap-[2px] rounded-[2px] border border-[#909090] bg-linear-to-r from-[#f5f5f5] to-[#cdcdd0]">
          <span className="h-[2px] w-[9px] bg-[#777]" />
          <span className="h-[2px] w-[9px] bg-[#777]" />
          <span className="h-[2px] w-[9px] bg-[#777]" />
        </div>
        <svg viewBox="0 0 10 6" className="mt-auto mb-[9px] h-[5px] w-[9px]"><path d="M0 0h10L5 6z" fill="#333" /></svg>
      </div>
    </div>
  );
}

function LinetypeManager() {
  return (
    <div role="dialog" aria-label="Linetype Manager" className="absolute top-[53px] right-0 left-[272px] rounded-tl-[6px] border-t border-b border-l border-t-white border-b-black border-l-black bg-[#b9d1ea] text-black">
      <div className="rounded-tl-[5px] border-b border-l border-b-[#2fc7e8] border-l-[#e8f2fb] bg-linear-to-b from-[#98b2d1] to-[#b9d1ea] to-[40px] pb-[7px] pl-[7px]">
        <div className="flex h-[34px] items-center pt-[6px] pl-[3px]">
          <svg viewBox="0 0 20 20" className="h-[20px] w-[20px]">
            <path d="M0 3h19v16H0z" fill="#d8d8d8" />
            <path d="M10 13h9v6H3z" fill="#222" />
            <g transform="scale(.48)"><AcadMark /></g>
          </svg>
          <h2 className="flex-1 pl-[3px] text-[14px] text-[#222]">Linetype Manager</h2>
          <button aria-label="Close" className="mr-px flex h-[22px] w-[39px] items-center justify-center rounded-[3px] border border-[#4b1410] bg-linear-to-b from-[#e0988c] from-50% to-[#bb3a26] to-50% ring-1 ring-[#e9b3aa] ring-inset">
            <svg viewBox="0 0 14 12" className="h-[12px] w-[14px]">
              <path d="m2 1 10 10M12 1 2 11" stroke="#54302c" strokeWidth="4.500" />
              <path d="m2.500 1.500 9 9m0-9-9 9" stroke="#fff" strokeWidth="2.500" />
            </svg>
          </button>
        </div>
        <div className="bg-[#f0f0f0] pt-[9px] pr-[8px] pb-[5px] pl-[10px] font-['Liberation_Sans'] text-[13px]">
          <div className="flex items-start gap-[12px] pr-[2px]">
            <fieldset className="min-w-0 flex-1 rounded-[3px] border border-[#d5dfe5] pt-[5px] pb-[12px] pl-[9px]">
              <legend className="-ml-[3px] px-[3px] leading-[16px]">Linetype filters</legend>
              <div className="flex items-center">
                <div className="relative">
                  <select aria-label="Linetype filters" className="block h-[24px] w-[282px] appearance-none rounded-[3px] border border-[#707070] bg-linear-to-b from-[#f2f2f2] to-[#cfcfcf] pl-[3px] text-[13px]">
                    <option>Show all linetypes</option>
                  </select>
                  <svg viewBox="0 0 10 6" className="pointer-events-none absolute top-[10px] right-[5px] h-[5px] w-[9px]"><path d="M0 0h10L5 6z" /></svg>
                </div>
                <label className="flex items-center gap-[3px] pl-[18px]">
                  <input type="checkbox" className="h-[16px] w-[16px] appearance-none border border-[#8e8f8f] bg-[#dfe2e5] ring-2 ring-[#f4f4f4] ring-inset" />
                  Invert filter
                </label>
              </div>
            </fieldset>
            <div className="grid grid-cols-2 gap-[6px] pt-[4px]">
              <DialogButton primary>Load...</DialogButton>
              <DialogButton>Delete</DialogButton>
              <DialogButton>Current</DialogButton>
              <DialogButton>Show details</DialogButton>
            </div>
          </div>
          <div className="mt-[9px] flex h-[22px] gap-[7px] border border-t-[#a0a0a0] border-r-white border-b-white border-l-[#a0a0a0] leading-[18px]">
            <span>Current Linetype:</span>
            <span>CONTINUOUS</span>
          </div>
          <div className="mt-[8px]"><LinetypeTable /></div>
          <div className="mt-[9px] flex justify-end gap-[8px]">
            <DialogButton>OK</DialogButton>
            <DialogButton>Cancel</DialogButton>
            <DialogButton>Help</DialogButton>
          </div>
        </div>
      </div>

      {/* pink pen marks */}
      <div className="pointer-events-none absolute top-[28px] right-[109px] h-[51px] w-[123px] border-[5px] border-[#ff4a9c]" />
      <div className="pointer-events-none absolute top-[361px] left-[5px] h-[40px] w-[527px] border-[5px] border-[#ff4a9c]" />
      <svg viewBox="0 0 66 76" className="pointer-events-none absolute top-[308px] left-[543px] h-[76px] w-[66px]" fill="none" stroke="#ff4a9c" strokeWidth="4">
        <path d="m1 40 3 2 7 29 15-15 8-12 10-17 9-10 9-15" />
      </svg>
    </div>
  );
}

export default function App() {
  return (
    <div className="relative flex min-h-screen flex-col overflow-hidden bg-[#696969] font-['Open_Sans','Noto_Sans',sans-serif] leading-[20px]">
      <TitleBar />
      <TabBar />
      <Ribbon />
      <Drawing />
      <LayoutTabs />
      <CommandLine />
      <StatusBar />
      <Taskbar />
      <button aria-label="Application menu" className="absolute top-0 left-0 flex h-[41px] w-[41px] items-center border border-[#222] bg-linear-to-b from-[#b9b9b9] to-[#757575] pl-[3px]">
        <svg viewBox="0 0 34 34" className="h-[30px] w-[26px]"><AcadMark /></svg>
        <Caret className="ml-px text-[#222]" />
      </button>
      <LinetypeManager />
    </div>
  );
}
